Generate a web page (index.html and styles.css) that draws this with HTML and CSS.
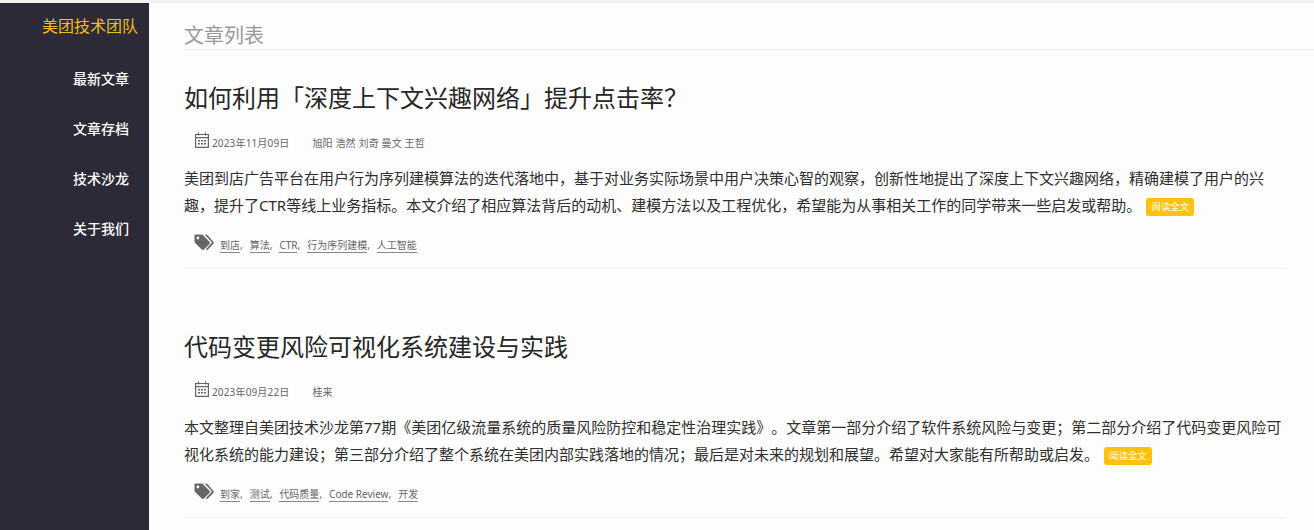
FILE: index.html
```html
<!DOCTYPE html>
<html lang="zh-CN">
<head>
  <meta charset="UTF-8" />
  <meta name="viewport" content="width=device-width, initial-scale=1.0"/>
  <title>美团技术团队</title>
  <link rel="stylesheet" href="styles.css">
</head>
<body>
  <svg class="icon-defs" width="0" height="0">
    <symbol id="icon-calendar" viewBox="0 0 14 16">
      <path d="M3.5 0.5v3M10.5 0.5v3M0.6 2.5h12.8v12.9h-12.8zM0.6 5.6h12.8" fill="none" stroke="currentColor" stroke-width="1.2"/>
      <path d="M3 8h2v1.5h-2zM6 8h2v1.5h-2zM9 8h2v1.5h-2zM3 11h2v1.5h-2zM6 11h2v1.5h-2zM9 11h2v1.5h-2z" fill="currentColor"/>
    </symbol>
    <symbol id="icon-tags" viewBox="0 0 20 18">
      <path d="M1.2 0.5h6.2c0.6 0 1.1 0.2 1.5 0.6l6.6 6.7c0.6 0.6 0.6 1.5 0 2.1l-5.6 5.6c-0.6 0.6-1.5 0.6-2.1 0l-6.7-6.6c-0.4-0.4-0.6-0.9-0.6-1.5v-6.2c0-0.4 0.3-0.7 0.7-0.7zM3.9 2.6a1.4 1.4 0 1 0 0 2.8a1.4 1.4 0 1 0 0-2.8z" fill="currentColor" fill-rule="evenodd"/>
      <path d="M10.6 0.5h1.4c0.5 0 1 0.2 1.4 0.6l5.9 6.7c0.6 0.6 0.6 1.5 0 2.1l-5.4 5.6c-0.5 0.5-1.3 0.5-1.8 0l-0.3-0.3l5.4-5.6c0.5-0.6 0.5-1.4 0-2z" fill="currentColor"/>
    </symbol>
  </svg>

  <div class="top-strip"></div>

  <div class="layout">
    <aside class="sidebar">
      <a class="brand" href="#">美团技术团队</a>
      <nav class="nav">
        <a href="#">最新文章</a>
        <a href="#">文章存档</a>
        <a href="#">技术沙龙</a>
        <a href="#">关于我们</a>
      </nav>
    </aside>

    <main class="main">
      <h2 class="page-title">文章列表</h2>

      <article class="post">
        <h1 class="post-title">如何利用「深度上下文兴趣网络」提升点击率？</h1>
        <div class="post-meta">
          <svg class="icon-calendar"><use href="#icon-calendar"></use></svg>
          <span class="post-date">2023年11月09日</span>
          <span class="post-authors">旭阳 浩然 刘奇 曼文 王哲</span>
        </div>
        <p class="post-summary">美团到店广告平台在用户行为序列建模算法的迭代落地中，基于对业务实际场景中用户决策心智的观察，创新性地提出了深度上下文兴趣网络，精确建模了用户的兴趣，提升了CTR等线上业务指标。本文介绍了相应算法背后的动机、建模方法以及工程优化，希望能为从事相关工作的同学带来一些启发或帮助。<a class="read-more" href="#">阅读全文</a></p>
        <div class="post-tags">
          <svg class="icon-tags"><use href="#icon-tags"></use></svg>
          <a href="#">到店</a><i>,</i>
          <a href="#">算法</a><i>,</i>
          <a href="#">CTR</a><i>,</i>
          <a href="#">行为序列建模</a><i>,</i>
          <a href="#">人工智能</a>
        </div>
      </article>

      <article class="post">
        <h1 class="post-title">代码变更风险可视化系统建设与实践</h1>
        <div class="post-meta">
          <svg class="icon-calendar"><use href="#icon-calendar"></use></svg>
          <span class="post-date">2023年09月22日</span>
          <span class="post-authors">桂来</span>
        </div>
        <p class="post-summary">本文整理自美团技术沙龙第77期《美团亿级流量系统的质量风险防控和稳定性治理实践》。文章第一部分介绍了软件系统风险与变更；第二部分介绍了代码变更风险可视化系统的能力建设；第三部分介绍了整个系统在美团内部实践落地的情况；最后是对未来的规划和展望。希望对大家能有所帮助或启发。<a class="read-more" href="#">阅读全文</a></p>
        <div class="post-tags">
          <svg class="icon-tags"><use href="#icon-tags"></use></svg>
          <a href="#">到家</a><i>,</i>
          <a href="#">测试</a><i>,</i>
          <a href="#">代码质量</a><i>,</i>
          <a href="#">Code Review</a><i>,</i>
          <a href="#">开发</a>
        </div>
      </article>
    </main>
  </div>
</body>
</html>
```

FILE: styles.css
```css
* {
  box-sizing: border-box;
}

html, body {
  height: 100%;
}

body {
  margin: 0;
  overflow: hidden;
  background: #fdfdfd;
  color: #2e2e2e;
  font-family: "Noto Sans", "Noto Sans CJK SC", sans-serif;
  text-spacing-trim: space-all;
}

a {
  text-decoration: none;
}

.icon-defs {
  display: block;
  height: 0;
}

.top-strip {
  height: 3px;
  background: #f1f1f1;
}

.layout {
  display: flex;
  height: calc(100% - 3px);
}

.sidebar {
  flex: 0 0 149px;
  display: flex;
  flex-direction: column;
  align-items: flex-end;
  background: #2b2a36;
}

.brand {
  margin-top: 12px;
  padding-right: 11px;
  color: #f3bd1e;
  font-size: 16px;
  line-height: 22px;
}

.nav {
  display: flex;
  flex-direction: column;
  margin-top: 29px;
  padding-right: 20px;
}

.nav a {
  height: 50px;
  color: #fff;
  font-size: 14px;
  font-weight: 500;
  line-height: 26px;
}

.main {
  flex: 1;
  min-width: 0;
  padding: 0 30px 0 35px;
}

.page-title {
  margin: 0 -30px 0 0;
  padding-top: 19px;
  height: 47px;
  border-bottom: 1px solid #eee;
  color: #999;
  font-size: 20px;
  font-weight: 400;
  line-height: 28px;
}

.post {
  margin-top: 31px;
  padding-bottom: 13px;
  border-bottom: 1px solid #f4f4f4;
}

.post + .post {
  margin-top: 61px;
}

.post-title {
  margin: 0;
  color: #262626;
  font-size: 24px;
  font-weight: 400;
  line-height: 34px;
}

.post-meta {
  display: flex;
  align-items: center;
  height: 20px;
  margin-top: 17px;
  padding-left: 11px;
  color: #666;
  font-size: 10px;
  letter-spacing: 0.15px;
}

.icon-calendar {
  width: 14px;
  height: 16px;
  margin: -4px 3px 0 0;
  color: #666;
}

.post-authors {
  margin-left: 23px;
}

.post-summary {
  margin: 13px 0 0;
  font-size: 15px;
  line-height: 27px;
}

.read-more {
  display: inline-block;
  margin-left: 5px;
  padding: 0 5px;
  height: 18px;
  border-radius: 3px;
  background: #fec10d;
  color: #fff;
  font-size: 9.5px;
  line-height: 18px;
  vertical-align: 1px;
}

.post-tags {
  display: flex;
  align-items: center;
  height: 20px;
  margin-top: 16px;
  padding-left: 10px;
  color: #666;
  font-size: 10px;
}

.post-tags a {
  border-bottom: 1px solid #888;
  color: #666;
  line-height: 14px;
}

.post-tags i {
  margin-right: 7px;
  font-style: normal;
}

.icon-tags {
  width: 20px;
  height: 18px;
  margin: -5px 6px 0 0;
  color: #666;
}
```
